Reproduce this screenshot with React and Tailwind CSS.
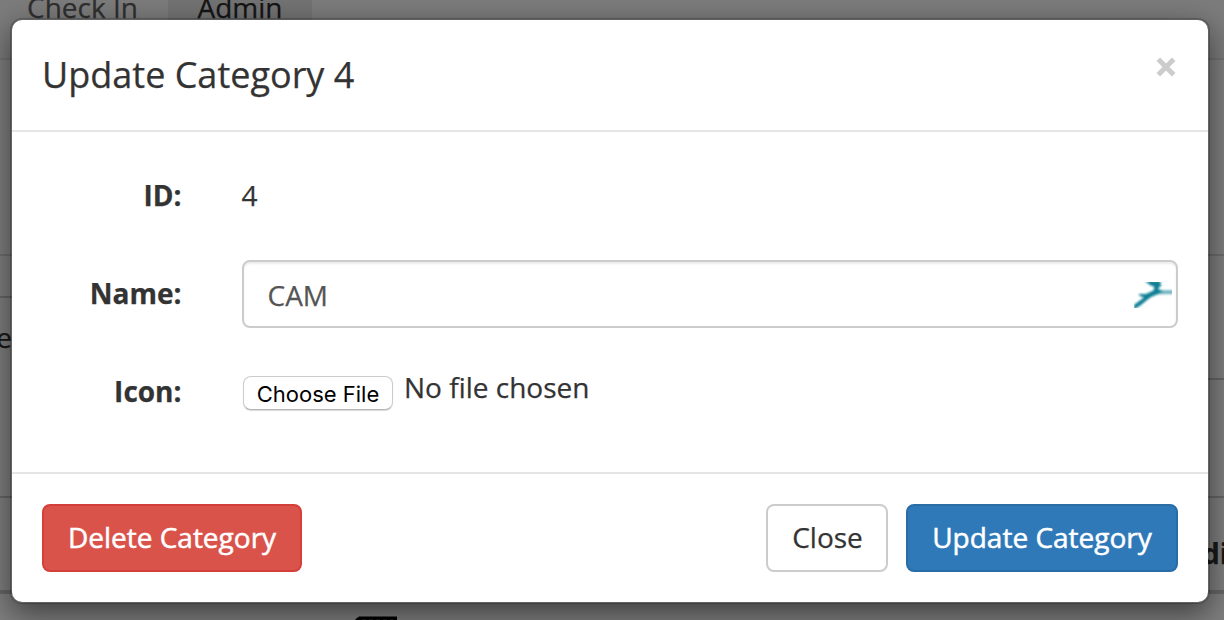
const sans = "font-['Open_Sans','Noto_Sans',sans-serif]";

function Page() {
  return (
    <div aria-hidden="true" className="h-[620px] w-full overflow-hidden bg-white">
      <div className="flex h-[60px] border-b-2 border-[#e7e7e7] bg-[#f8f8f8] text-[28px] leading-[40px]">
        <div className="-mt-[13px] w-[168px] pl-[27px] text-[#5e5e5e]">Check In</div>
        <div className="h-[58px] w-[144px] bg-[#e7e7e7] text-center text-[#2a2a2a]">
          <div className="-mt-[13px]">Admin</div>
        </div>
      </div>
      <div className="flex justify-between text-[28px] leading-[40px] text-[#333]">
        <div className="flex w-3 flex-col">
          <div className="h-[196px] border-b-2 border-[#ddd]" />
          <div className="h-[42px] border-b-2 border-[#ccc]" />
          <div className="flex h-[200px] justify-end border-b-2 border-[#ccc] pt-[19px]">e</div>
          <div className="h-[96px] border-b-4 border-[#ccc]" />
        </div>
        <div className="flex w-4 flex-col">
          <div className="h-[196px] border-b-2 border-[#ddd]" />
          <div className="h-[124px] border-b-2 border-[#ccc]" />
          <div className="h-[118px] border-b-2 border-[#ccc]" />
          <div className="h-[96px] border-b-4 border-[#ccc] pt-[35px] font-bold">
            <span className="-ml-[6px]">di</span>
          </div>
        </div>
      </div>
      <svg className="mt-[22px] ml-[354px] block" width="44" height="8" viewBox="0 0 44 8">
        <path d="M1 8V4Q2 2 5 0.5H43V8Z" fill="#000" />
        <path d="M8 3.5H39" stroke="#303030" strokeWidth="1" strokeDasharray="4 3" />
      </svg>
    </div>
  );
}

function Runner() {
  return (
    <svg className="mt-px" width="38" height="26" viewBox="0 0 38 26">
      <defs>
        <filter id="soft" x="-10%" y="-10%" width="120%" height="120%">
          <feGaussianBlur stdDeviation="0.9" />
        </filter>
      </defs>
      <g filter="url(#soft)" fill="#0b7e94">
        <path d="M11 -1H27L26 2 28 3.5 25 5 24.5 7.5 29 9 24 12 17 15 13 18 7 23 0 27.5V23L10 15.5 5 13.5 5 12 12 12 19.5 8.5 20.5 5 16 3Z" />
        <path d="M23 8.2H40V12L22 12.2Z" opacity="0.6" />
      </g>
    </svg>
  );
}

function Row({ label, children }) {
  return (
    <div className="flex">
      <div className="w-[169.5px] shrink-0 pt-[13px] text-right font-bold">{label}</div>
      <div className="ml-[60.5px] mr-[30px] flex-1">{children}</div>
    </div>
  );
}

const button = "h-[68px] rounded-[8px] border-2 pb-[2px] text-center text-[28px] leading-[40px]";

export default function App() {
  return (
    <div className={`relative h-[620px] w-[1224px] overflow-hidden text-[#333] [-webkit-text-stroke:0.25px] ${sans}`}>
      <Page />
      <div className="absolute inset-0 bg-black/50 pt-[18px] pr-[14px] pl-[10px]">
        <div
          role="dialog"
          className="h-[586px] rounded-[12px] border-2 border-black/20 bg-white bg-clip-padding text-[28px] leading-[40px] shadow-[0_10px_30px_rgba(0,0,0,0.5)]"
        >
          <header className="flex h-[112px] items-start justify-between border-b-2 border-[#e5e5e5] px-[30px] pt-[29px]">
            <h4 className="text-[36px] leading-[51px]">Update Category 4</h4>
            <button aria-label="Dismiss" className="mt-[8px] mr-[2px]">
              <svg width="20" height="20" viewBox="0 0 20 20">
                <path d="M2.3 2.3L17.7 17.7M17.7 2.3L2.3 17.7" stroke="#ccc" strokeWidth="5" />
              </svg>
            </button>
          </header>
          <div className="flex h-[342px] flex-col gap-[30px] border-b-2 border-[#e5e5e5] pt-[30px]">
            <Row label="ID:">
              <div className="-ml-[0.5px] h-[68px] pt-[13px]">4</div>
            </Row>
            <Row label="Name:">
              <div className="flex h-[68px] items-center justify-between rounded-[8px] border-2 border-[#ccc] pr-[4px] pl-[23.5px] text-[#555] shadow-[inset_0_2px_2px_rgba(0,0,0,0.075)]">
                <span className="pt-[2px]">CAM</span>
                <Runner />
              </div>
            </Row>
            <Row label="Icon:">
              <div className="flex h-[68px] items-start pt-[18px]">
                <button className="ml-px h-[34px] w-[150px] rounded-[8px] border border-[#ccc] border-b-[#b5b5b5] bg-white pt-[1px] font-[Inter,sans-serif] text-[22px] leading-[30px] text-black shadow-[0_1px_1px_rgba(0,0,0,0.15)] [-webkit-text-stroke:0px]">
                  Choose File
                </button>
                <span className="-mt-[9px] ml-[11px]">No file chosen</span>
              </div>
            </Row>
          </div>
          <footer className="flex gap-[18px] px-[30px] pt-[30px]">
            <button className={`${button} mr-auto w-[260px] border-[#d43f3a] bg-[#da534b] text-white [-webkit-text-stroke:0.5px]`}>Delete Category</button>
            <button className={`${button} w-[122px] border-[#ccc] bg-white pl-px`}>Close</button>
            <button className={`${button} w-[272px] border-[#2a6ca5] bg-[#2f79b9] text-white [-webkit-text-stroke:0.5px]`}>Update Category</button>
          </footer>
        </div>
      </div>
    </div>
  );
}
